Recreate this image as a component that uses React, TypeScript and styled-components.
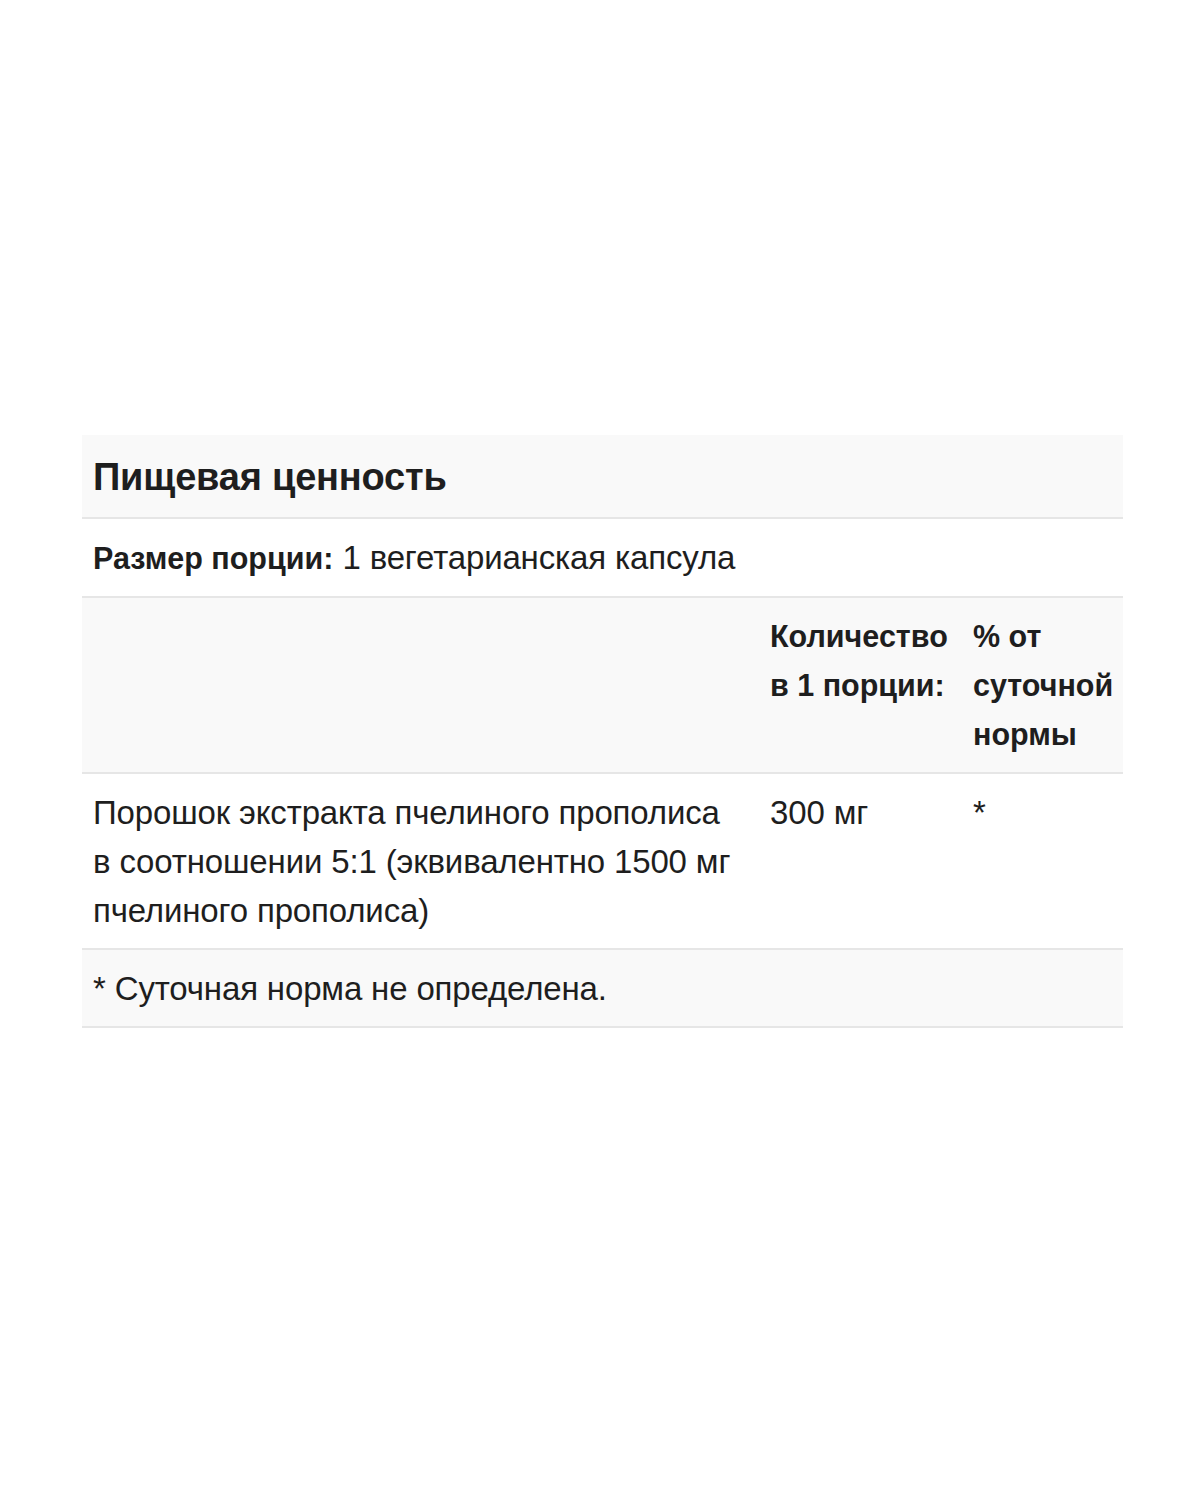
import React from "react";
import styled, { createGlobalStyle } from "styled-components";

const GlobalStyle = createGlobalStyle`
  html, body {
    margin: 0;
    padding: 0;
    background: #ffffff;
  }
  body {
    font-family: "Liberation Sans", Arial, sans-serif;
    color: #1e1e1e;
  }
`;

const Page = styled.div`
  width: 1200px;
  box-sizing: border-box;
  padding: 435px 0 0 82px;
`;

const Table = styled.div`
  width: 1041px;
  display: flex;
  flex-direction: column;
`;

const Row = styled.div<{ $shaded?: boolean }>`
  display: grid;
  grid-template-columns: 677px 203px 1fr;
  background: ${({ $shaded }) => ($shaded ? "#f9f9f9" : "#ffffff")};
  border-bottom: 2px solid #e6e6e6;
`;

const Cell = styled.div<{ $bold?: boolean; $span?: boolean }>`
  grid-column: ${({ $span }) => ($span ? "1 / -1" : "auto")};
  padding: 14px 11px 13px;
  font-size: ${({ $bold }) => ($bold ? "30.5px" : "33px")};
  line-height: 49px;
  letter-spacing: ${({ $bold }) => ($bold ? "0" : "-0.15px")};
  font-weight: ${({ $bold }) => ($bold ? 700 : 400)};
`;

const NameCell = styled(Cell)`
  padding-right: 20px;
`;

const Title = styled.h2`
  grid-column: 1 / -1;
  margin: 0;
  padding: 16px 11px 13px;
  font-size: 38px;
  line-height: 53px;
  letter-spacing: -0.2px;
  font-weight: 700;
`;

const Strong = styled.b`
  font-weight: 700;
  font-size: 30.5px;
  letter-spacing: 0;
`;

const App: React.FC = () => {
  return (
    <>
      <GlobalStyle />
      <Page>
        <Table>
          <Row $shaded>
            <Title>Пищевая ценность</Title>
          </Row>
          <Row>
            <Cell $span>
              <Strong>Размер порции:</Strong> 1 вегетарианская капсула
            </Cell>
          </Row>
          <Row $shaded>
            <NameCell />
            <Cell $bold>Количество в 1 порции:</Cell>
            <Cell $bold>% от суточной нормы</Cell>
          </Row>
          <Row>
            <NameCell>
              Порошок экстракта пчелиного прополиса в соотношении 5:1
              (эквивалентно 1500 мг пчелиного прополиса)
            </NameCell>
            <Cell>300 мг</Cell>
            <Cell>*</Cell>
          </Row>
          <Row $shaded>
            <Cell $span>* Суточная норма не определена.</Cell>
          </Row>
        </Table>
      </Page>
    </>
  );
};

export default App;
